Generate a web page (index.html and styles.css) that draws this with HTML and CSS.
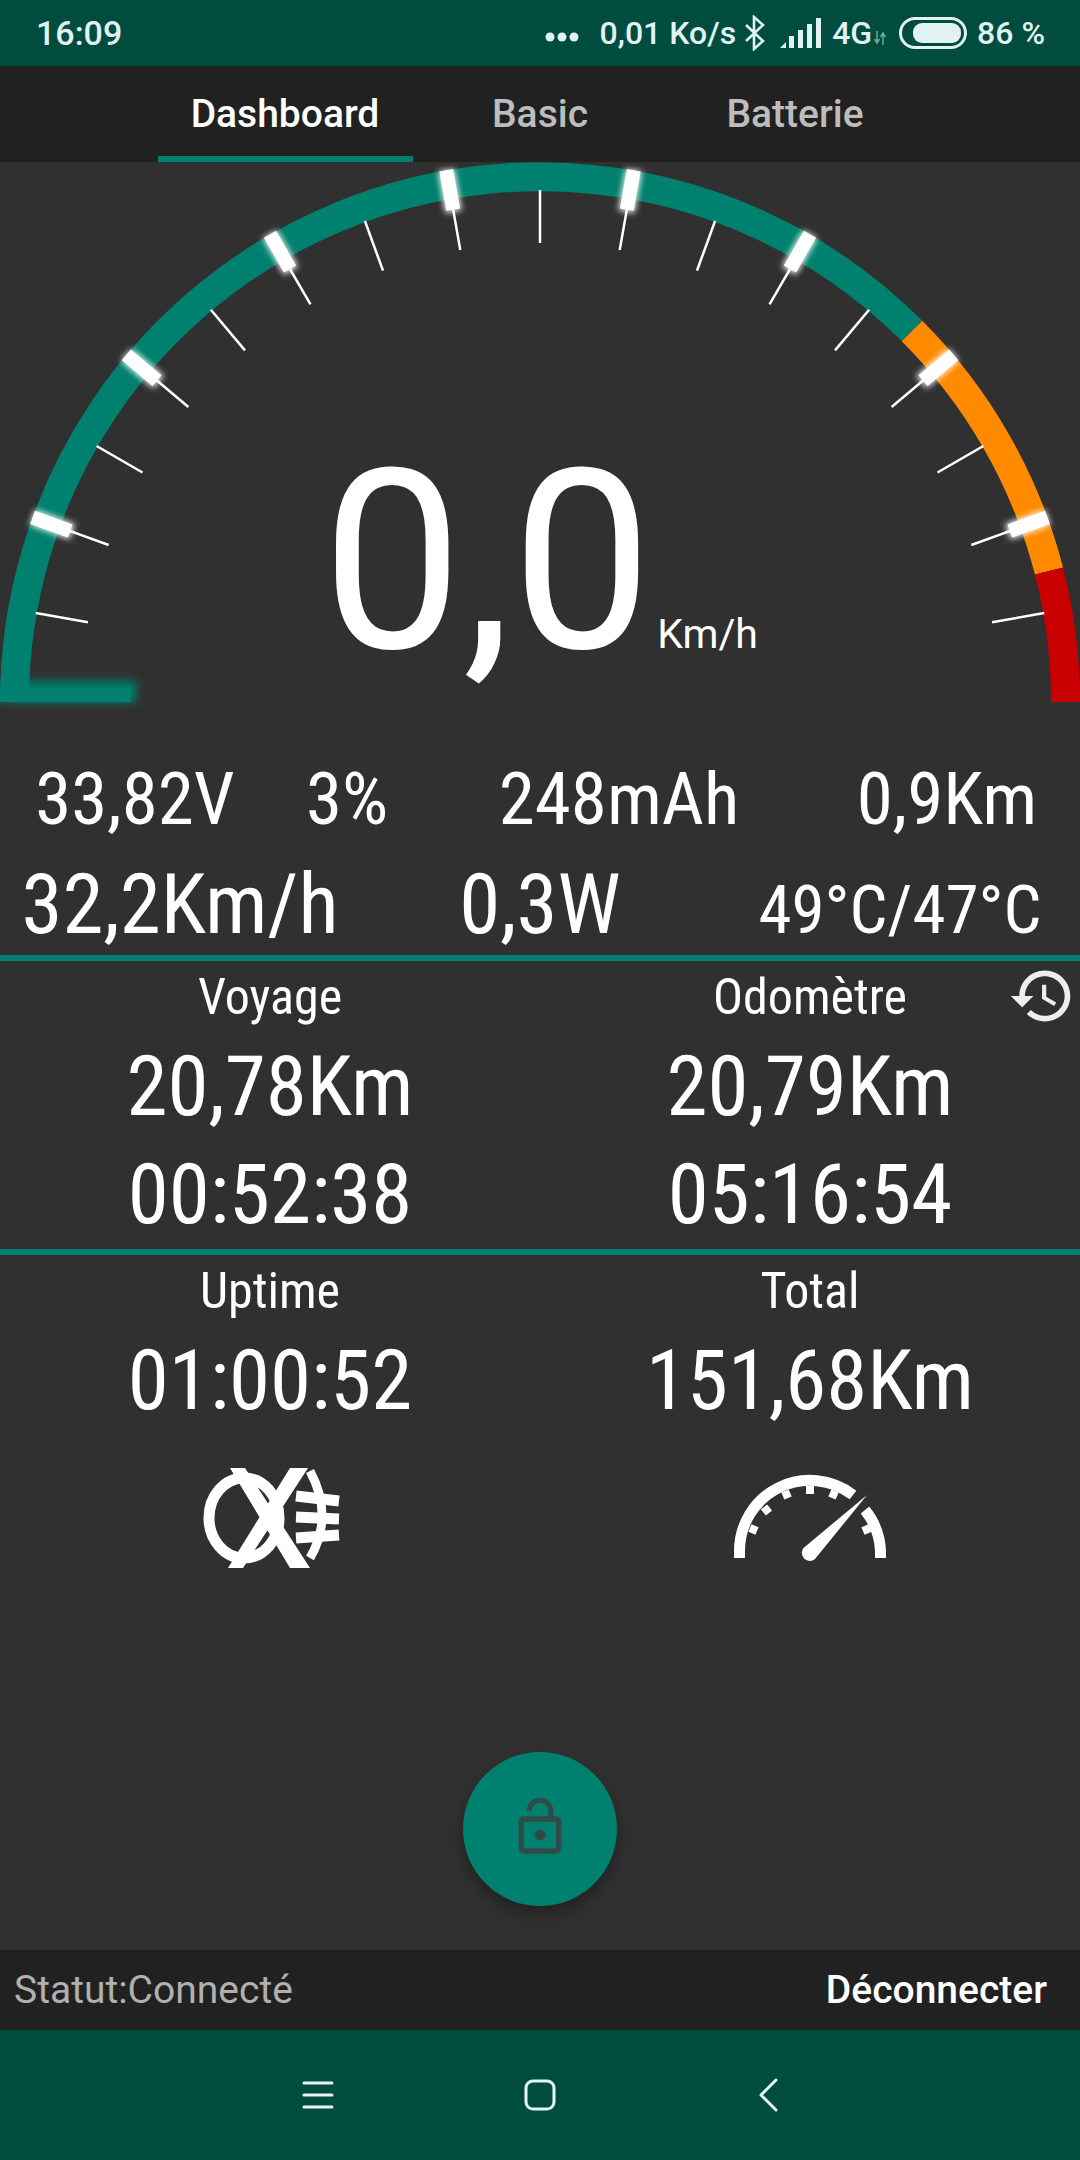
FILE: index.html
```html
<!DOCTYPE html>
<html>
<head>
  <title>Dashboard</title>
  <meta name="viewport" content="width=device-width, initial-scale=1">
  <link rel="stylesheet" href="styles.css">
</head>
<body>

  <div class="statusbar">
    <span class="clock">16:09</span>
    <div class="status-right">
      <svg class="dots" width="34" height="10" viewBox="0 0 34 10"><circle cx="5" cy="5" r="4.5"/><circle cx="17" cy="5" r="4.5"/><circle cx="29" cy="5" r="4.5"/></svg>
      <span class="speed">0,01 Ko/s</span>
      <svg class="bt" width="22" height="36" viewBox="0 0 22 36"><path d="M2 10 L19 26 L10 34 V2 L19 10 L2 26" fill="none" stroke="#e0f2f1" stroke-width="2.6"/></svg>
      <svg class="signal" width="41" height="30" viewBox="0 0 41 30"><path d="M0 30 L6 24 V30 Z"/><rect x="9" y="18" width="5" height="12"/><rect x="18" y="12" width="5" height="18"/><rect x="27" y="6" width="5" height="24"/><rect x="36" y="0" width="5" height="30"/></svg>
      <span class="net">4G</span>
      <svg class="updown" width="12" height="14" viewBox="0 0 12 14"><path d="M3 0v11M0.5 8l2.5 4 2.500-4M9 14V3M6.500 6L9 2l2.500 4" fill="none" stroke="#6fa8a0" stroke-width="1.500"/></svg>
      <svg class="battery" width="68" height="32" viewBox="0 0 68 32"><rect x="1.500" y="1.500" width="65" height="29" rx="14.500" fill="none" stroke="#e0f2f1" stroke-width="3"/><rect x="14" y="6" width="48" height="20" rx="9" fill="#e0f2f1"/></svg>
      <span class="pct">86 %</span>
    </div>
  </div>

  <div class="tabs">
    <div class="tab active">Dashboard</div>
    <div class="tab">Basic</div>
    <div class="tab">Batterie</div>
  </div>

  <div class="gauge">
    <svg class="gauge-svg" width="1080" height="560" viewBox="0 162 1080 560">
      <defs>
        <filter id="glow" x="-60%" y="-60%" width="220%" height="220%"><feGaussianBlur stdDeviation="3"/></filter>
        <filter id="soft" x="-20%" y="-100%" width="140%" height="300%"><feGaussianBlur stdDeviation="5"/></filter>
        <g id="minor"><line x1="540" y1="190" x2="540" y2="243" stroke="#fff" stroke-width="2.500"/></g>
        <g id="major">
          <rect x="532" y="162" width="16" height="42" fill="#fff" filter="url(#glow)"/>
          <rect x="533" y="162" width="14" height="40" fill="#fff"/>
          <line x1="540" y1="200" x2="540" y2="243" stroke="#fff" stroke-width="2.500"/>
        </g>
      </defs>

      <rect x="0" y="681" width="136" height="21" fill="#00806e" filter="url(#soft)"/>
      <rect x="0" y="688" width="131" height="14" fill="#00806e"/>

      <path d="M14.500 702 A525.500 525.500 0 0 1 912 331" fill="none" stroke="#00806e" stroke-width="29"/>
      <path d="M912 331 A525.500 525.500 0 0 1 1049 571" fill="none" stroke="#ff8a00" stroke-width="29"/>
      <path d="M1049 571 A525.500 525.500 0 0 1 1065.500 702" fill="none" stroke="#c80000" stroke-width="29"/>

      <use href="#minor" transform="rotate(-80 540 702)"/>
      <use href="#major" transform="rotate(-70 540 702)"/>
      <use href="#minor" transform="rotate(-60 540 702)"/>
      <use href="#major" transform="rotate(-50 540 702)"/>
      <use href="#minor" transform="rotate(-40 540 702)"/>
      <use href="#major" transform="rotate(-30 540 702)"/>
      <use href="#minor" transform="rotate(-20 540 702)"/>
      <use href="#major" transform="rotate(-10 540 702)"/>
      <use href="#minor"/>
      <use href="#major" transform="rotate(10 540 702)"/>
      <use href="#minor" transform="rotate(20 540 702)"/>
      <use href="#major" transform="rotate(30 540 702)"/>
      <use href="#minor" transform="rotate(40 540 702)"/>
      <use href="#major" transform="rotate(50 540 702)"/>
      <use href="#minor" transform="rotate(60 540 702)"/>
      <use href="#major" transform="rotate(70 540 702)"/>
      <use href="#minor" transform="rotate(80 540 702)"/>
    </svg>
    <div class="speed-read">
      <span class="speed-value">0,0</span>
      <span class="speed-unit">Km/h</span>
    </div>
  </div>

  <div class="stats stats-four">
    <span>33,82V</span><span>3%</span><span>248mAh</span><span>0,9Km</span>
  </div>
  <div class="stats stats-three">
    <span>32,2Km/h</span><span>0,3W</span><span class="temp">49°C/47°C</span>
  </div>

  <div class="panel panel-trip">
    <svg class="history" width="68" height="68" viewBox="0 0 24 24"><path fill="#eee" d="M13 3c-4.970 0-9 4.030-9 9H1l3.890 3.890.07.140L9 12H6c0-3.870 3.130-7 7-7s7 3.130 7 7-3.130 7-7 7c-1.930 0-3.680-.79-4.940-2.060l-1.420 1.420C8.270 19.990 10.510 21 13 21c4.970 0 9-4.030 9-9s-4.030-9-9-9zm-1 5v5l4.280 2.540.72-1.210-3.500-2.080V8H12z"/></svg>
    <div class="cell">
      <div class="cell-label">Voyage</div>
      <div class="cell-value">20,78Km</div>
      <div class="cell-value">00:52:38</div>
    </div>
    <div class="cell">
      <div class="cell-label">Odomètre</div>
      <div class="cell-value">20,79Km</div>
      <div class="cell-value">05:16:54</div>
    </div>
  </div>

  <div class="panel panel-total">
    <div class="cell">
      <div class="cell-label">Uptime</div>
      <div class="cell-value">01:00:52</div>
      <svg class="cell-icon" width="240" height="140" viewBox="0 0 240 140">
        <ellipse cx="94" cy="77" rx="35" ry="40" fill="none" stroke="#fff" stroke-width="11"/>
        <path d="M80 27 H95 L160 127 H140 Z M140 27 H158 L93 127 H78 Z" fill="#fff"/>
        <path d="M160 30 C176 60 176 90 160 117" fill="none" stroke="#fff" stroke-width="9"/>
        <path d="M146 55 L189 60 M146 76 L189 78 M146 97 L189 94" fill="none" stroke="#fff" stroke-width="11"/>
      </svg>
    </div>
    <div class="cell">
      <div class="cell-label">Total</div>
      <div class="cell-value">151,68Km</div>
      <svg class="cell-icon" width="240" height="140" viewBox="0 0 240 140">
        <path d="M49.500 117 V110 A70.500 70.500 0 0 1 163 54 M175 69 A70.500 70.500 0 0 1 190.500 110 V117" fill="none" stroke="#fff" stroke-width="11"/>
        <path d="M120 45 V53 M95 50 L98 57 M74 66 L79 72 M60 87 L67 90 M145 50 L142 57 M180 87 L173 90" stroke="#fff" stroke-width="8"/>
        <path d="M177 54 L125 118 A8 8 0 0 1 113.500 107 Z" fill="#fff"/>
      </svg>
    </div>
  </div>

  <div class="fab-row">
    <button class="fab">
      <svg width="64" height="64" viewBox="0 0 24 24"><path fill="#2f4a47" d="M12 17c1.100 0 2-.9 2-2s-.9-2-2-2-2 .9-2 2 .9 2 2 2zm6-9h-1V6c0-2.760-2.240-5-5-5S7 3.240 7 6h1.900c0-1.710 1.390-3.100 3.100-3.100 1.710 0 3.100 1.390 3.100 3.100v2H6c-1.100 0-2 .9-2 2v10c0 1.100.9 2 2 2h12c1.100 0 2-.9 2-2V10c0-1.100-.9-2-2-2zm0 12H6V10h12v10z"/></svg>
    </button>
  </div>

  <div class="connbar">
    <span class="conn-status">Statut:Connecté</span>
    <span class="conn-action">Déconnecter</span>
  </div>

  <div class="navbar">
    <svg width="32" height="30" viewBox="0 0 32 30"><path d="M2 3h28M2 15h28M2 27h28" stroke="#e8f5f3" stroke-width="3" stroke-linecap="round"/></svg>
    <svg width="32" height="32" viewBox="0 0 32 32"><rect x="2" y="2" width="28" height="28" rx="7" fill="none" stroke="#e8f5f3" stroke-width="3"/></svg>
    <svg width="20" height="34" viewBox="0 0 20 34"><path d="M18 2 L3 17 L18 32" fill="none" stroke="#e8f5f3" stroke-width="3" stroke-linecap="round" stroke-linejoin="round"/></svg>
  </div>

</body>
</html>
```

FILE: styles.css
```css
body {
  margin: 0;
  width: 1080px;
  height: 2160px;
  overflow: hidden;
  display: flex;
  flex-direction: column;
  background: #303030;
  color: #fff;
  font-family: Roboto, "Noto Sans", sans-serif;
}

.statusbar {
  height: 66px;
  flex: none;
  display: flex;
  align-items: center;
  justify-content: space-between;
  padding: 0 35px 0 36px;
  background: #004d40;
  color: #e0f2f1;
  font-size: 32px;
  font-weight: 500;
}
.clock { font-size: 34px; }
.status-right {
  display: flex;
  align-items: center;
}
.status-right svg {
  fill: #e0f2f1;
  flex: none;
}
.dots { margin: 8px 21px 0 0; }
.bt { margin-left: 8px; }
.signal { margin-left: 14px; }
.net { margin-left: 11px; }
.updown { margin: 10px 0 0 2px; }
.battery { margin-left: 13px; }
.pct { margin-left: 10px; }

.tabs {
  height: 96px;
  flex: none;
  display: grid;
  grid-template-columns: repeat(3, 255px);
  justify-content: center;
  background: #212121;
  font-size: 39px;
  font-weight: 500;
  color: #bdbdbd;
}
.tab {
  display: flex;
  align-items: center;
  justify-content: center;
}
.tab.active {
  color: #fff;
  box-shadow: inset 0 -6px 0 #00806e;
}

.gauge {
  position: relative;
  height: 590px;
  flex: none;
}
.gauge-svg {
  display: block;
}
.speed-read {
  position: absolute;
  left: 322px;
  top: 276px;
  display: flex;
  align-items: baseline;
}
.speed-value {
  font-size: 250px;
  font-weight: 400;
  font-stretch: 88%;
  line-height: 1;
}
.speed-unit {
  margin-left: 5px;
  font-size: 41px;
  font-weight: 400;
  font-stretch: 93%;
}

.stats {
  display: grid;
  align-items: baseline;
  text-align: center;
  font-stretch: 75%;
}
.stats-four {
  grid-template-columns: 270px 154px 390px 1fr;
  height: 100px;
  font-size: 73px;
  line-height: 95px;
}
.stats-three {
  grid-template-columns: repeat(3, 1fr);
  height: 103px;
  font-size: 83px;
  line-height: 105px;
}
.temp { font-size: 67px; }

.panel {
  position: relative;
  display: grid;
  grid-template-columns: 540px 540px;
  border-top: 6px solid #00806e;
  text-align: center;
}
.panel-trip { height: 288px; }
.cell-label {
  font-size: 50px;
  font-stretch: 75%;
  line-height: 72px;
}
.cell-value {
  font-size: 83px;
  font-stretch: 75%;
  line-height: 108px;
}
.cell-icon {
  display: block;
  margin: 6px auto 0;
}
.history {
  position: absolute;
  right: 4px;
  top: 1px;
}

.fab-row {
  flex: 1;
  display: flex;
  align-items: flex-end;
  justify-content: center;
  padding-bottom: 44px;
}
.fab {
  width: 154px;
  height: 154px;
  padding: 0;
  border: none;
  border-radius: 50%;
  background: #00806e;
  display: flex;
  align-items: center;
  justify-content: center;
  box-shadow: 0 8px 16px rgba(0, 0, 0, 0.3);
}
.fab svg { margin-bottom: 4px; }

.connbar {
  height: 80px;
  flex: none;
  display: flex;
  align-items: center;
  justify-content: space-between;
  padding: 0 33px 0 14px;
  background: #212121;
  font-size: 39px;
}
.conn-status { color: #b0b0b0; }
.conn-action { font-weight: 500; }

.navbar {
  height: 130px;
  flex: none;
  display: flex;
  align-items: center;
  justify-content: center;
  gap: 190px;
  background: #004d40;
}
.navbar svg:last-child { margin-left: 12px; }
```
